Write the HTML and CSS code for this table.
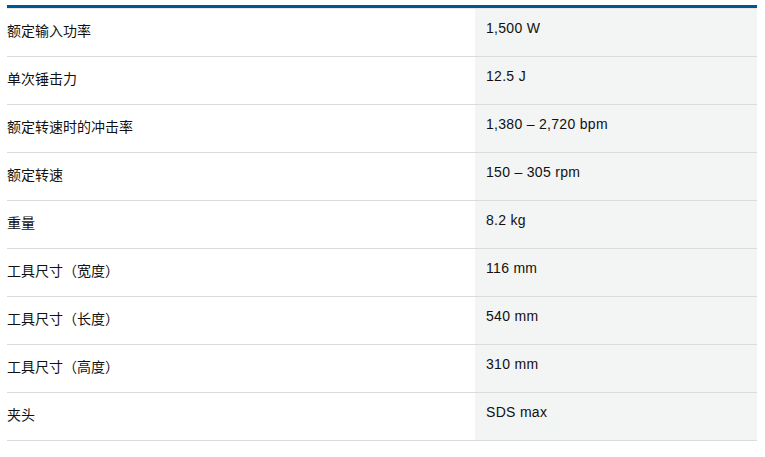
FILE: index.html
```html
<!DOCTYPE html>
<html lang="zh">
<head>
<meta charset="utf-8">
<title>技术参数</title>
<link rel="stylesheet" href="styles.css">
</head>
<body>
<div class="specs">
  <div class="row"><div class="label">额定输入功率</div><div class="value">1,500 W</div></div>
  <div class="row"><div class="label">单次锤击力</div><div class="value">12.5 J</div></div>
  <div class="row"><div class="label">额定转速时的冲击率</div><div class="value">1,380 – 2,720 bpm</div></div>
  <div class="row"><div class="label">额定转速</div><div class="value">150 – 305 rpm</div></div>
  <div class="row"><div class="label">重量</div><div class="value">8.2 kg</div></div>
  <div class="row"><div class="label">工具尺寸（宽度）</div><div class="value">116 mm</div></div>
  <div class="row"><div class="label">工具尺寸（长度）</div><div class="value">540 mm</div></div>
  <div class="row"><div class="label">工具尺寸（高度）</div><div class="value">310 mm</div></div>
  <div class="row"><div class="label">夹头</div><div class="value">SDS max</div></div>
</div>
</body>
</html>
```
FILE: styles.css
```css
html, body {
  margin: 0;
  padding: 0;
  background: #ffffff;
}
body {
  padding: 5px 8px 0 7px;
  color: #111111;
  font-family: "Liberation Sans", Arial, "Noto Sans CJK SC", sans-serif;
  font-size: 14px;
}
.specs {
  width: 750px;
  border-top: 3px solid #005691;
}
.specs::before {
  content: "";
  display: block;
  height: 1px;
  background: #e4e6e7;
}
.row {
  display: grid;
  grid-template-columns: 468px 1fr;
  height: 47px;
  border-bottom: 1px solid #dcdcdc;
}
.label {
  font-family: "Noto Sans CJK SC", sans-serif;
  line-height: 20px;
  padding-top: 11px;
}
.value {
  background: #f3f4f4;
  line-height: 20px;
  letter-spacing: 0.3px;
  padding: 9px 0 0 11px;
}
```
